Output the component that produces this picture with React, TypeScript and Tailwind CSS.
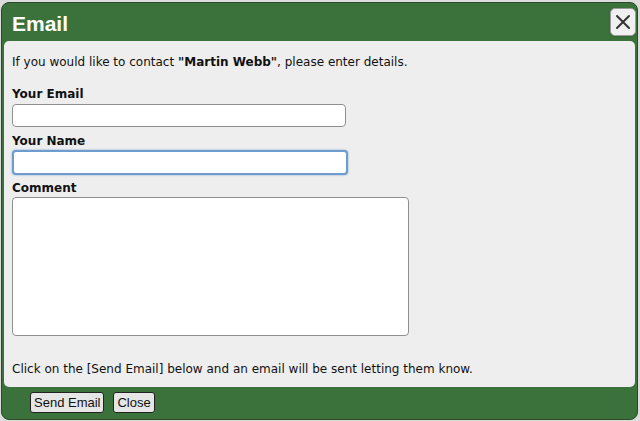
const App = () => {
  return (
    <div className="w-[640px] h-[421px] bg-[#dcdcdc] pt-[2px] px-[1px] font-['DejaVu_Sans',Verdana,sans-serif]">
      <div className="w-[637px] h-[418px] rounded-[8px] border border-[#2a4a2a] bg-[#3b723b] flex flex-col overflow-hidden">
        <div className="h-[38px] flex items-center justify-between pl-[10px] pr-[1px]">
          <h1 className="text-white font-bold text-[21px] leading-none pt-[2px] font-['Liberation_Sans',sans-serif]">
            Email
          </h1>
          <button className="w-[26px] h-[28px] rounded-[5px] bg-[#f0f0f0] border border-[#9a9a9a] flex items-center justify-center shadow-sm">
            <svg width="16" height="16" viewBox="0 0 16 16">
              <path d="M2 2 L14 14 M14 2 L2 14" stroke="#333" strokeWidth="2" strokeLinecap="round" />
            </svg>
          </button>
        </div>
        <div className="mx-[2px] h-[346px] bg-[#eeeeee] rounded-[5px] px-[8px] pt-[13px] text-[12px] text-[#111]">
          <p className="leading-[16px]">
            If you would like to contact <b>"Martin Webb"</b>, please enter details.
          </p>
          <label className="block font-bold mt-[16px] leading-[16px]">Your Email</label>
          <input className="block mt-[2px] w-[334px] h-[23px] bg-white rounded-[4px] border border-[#8f8f8f] outline-none" />
          <label className="block font-bold mt-[6px] leading-[16px]">Your Name</label>
          <input className="block mt-[1px] w-[336px] h-[25px] bg-white rounded-[4px] border-2 border-[#6e9ccf] outline-none shadow-[0_0_2px_#6e9ccf]" />
          <label className="block font-bold mt-[5px] leading-[16px]">Comment</label>
          <textarea className="block mt-[1px] w-[397px] h-[139px] bg-white rounded-[4px] border border-[#8f8f8f] outline-none resize-none" />
          <p className="mt-[25px] leading-[16px]">
            Click on the [Send Email] below and an email will be sent letting them know.
          </p>
        </div>
        <div className="flex items-center gap-[9px] pl-[28px] pt-[5px] font-['Liberation_Sans',Arial,sans-serif] text-[13px] text-[#111]">
          <button className="h-[21px] px-[3px] bg-[#e6e6e6] rounded-[3px] border border-[#222] leading-none">
            Send Email
          </button>
          <button className="h-[21px] px-[3px] bg-[#e6e6e6] rounded-[3px] border border-[#222] leading-none">
            Close
          </button>
        </div>
      </div>
    </div>
  );
};

export default App;
